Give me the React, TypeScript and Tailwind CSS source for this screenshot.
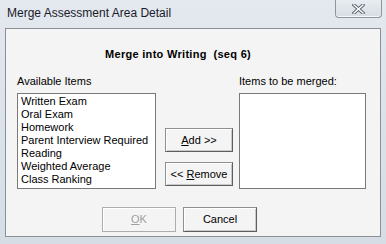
import React from 'react';

const items = [
  'Written Exam',
  'Oral Exam',
  'Homework',
  'Parent Interview Required',
  'Reading',
  'Weighted Average',
  'Class Ranking',
];

// classic dialog button
function DlgButton({ children, disabled, width = 'w-[74px]', height = 'h-[25px]' }: { children: React.ReactNode; disabled?: boolean; width?: string; height?: string }) {
  return (
    <button
      className={
        disabled
          ? `${width} ${height} flex items-center justify-center bg-[#f4f4f4] border border-[#adadad] text-[#a0a0a0] text-[11px] shadow-[inset_1px_1px_0_#ffffff]`
          : `${width} ${height} flex items-center justify-center bg-[#f4f4f4] border border-[#8e8f8f] border-r-[#5e5e5e] border-b-[#5e5e5e] text-black text-[11px] shadow-[inset_1px_1px_0_#ffffff,inset_-1px_-1px_0_#c9c9c9]`
      }
    >
      {children}
    </button>
  );
}

export default function App() {
  return (
    <div
      className="w-[386px] h-[244px] overflow-hidden flex flex-col bg-gradient-to-b from-[#e3e9ee] via-[#dbe2e8] to-[#d6dde4]"
      style={{ fontFamily: '"Liberation Sans", Arial, sans-serif' }}
    >
      {/* title bar */}
      <div className="h-[28px] flex items-start shrink-0">
        <div className="pl-[7px] pt-[6px] text-[12px] leading-[14px] text-[#1a1a2a]">Merge Assessment Area Detail</div>
        <div className="ml-auto mr-[4px] w-[47px] h-[18px] rounded-b-[4px] border border-t-0 border-[#8d96a0] bg-gradient-to-b from-[#e9edf1] to-[#d7dde3] flex items-center justify-center shadow-[inset_0_-1px_0_#f5f7f9]">
          <svg width="13" height="10" viewBox="0 0 13 10">
            <path d="M2 1 L11 9 M11 1 L2 9" stroke="#5f6a76" strokeWidth="3.4" strokeLinecap="square" />
            <path d="M2 1 L11 9 M11 1 L2 9" stroke="#ffffff" strokeWidth="1.4" strokeLinecap="square" />
          </svg>
        </div>
      </div>

      {/* client area */}
      <div className="mx-[5px] h-[209px] shrink-0 border border-[#8a9096] bg-[#f4f4f4] flex flex-col text-[11px] text-black">
        <div className="mt-[19px] pl-[99px] h-[13px] leading-[13px] font-bold tracking-[0.3px] whitespace-pre">Merge into Writing  (seq 6)</div>

        <div className="mt-[14px] pl-[11px] flex">
          {/* available */}
          <div className="flex flex-col w-[139px]">
            <div className="h-[13px] leading-[13px]">Available Items</div>
            <div className="mt-[5px] h-[96px] border border-[#7a7a7a] bg-white pl-[3px] pt-[1px] overflow-hidden">
              {items.map((it) => (
                <div key={it} className="h-[13px] leading-[13px] whitespace-nowrap">{it}</div>
              ))}
            </div>
          </div>

          {/* buttons */}
          <div className="ml-[9px] pt-[53px] flex flex-col gap-[10px]">
            <DlgButton width="w-[68px]" height="h-[24px]">
              <span><span className="underline">A</span>dd &gt;&gt;</span>
            </DlgButton>
            <DlgButton width="w-[68px]" height="h-[24px]">
              <span>&lt;&lt; <span className="underline">R</span>emove</span>
            </DlgButton>
          </div>

          {/* merged */}
          <div className="ml-[6px] flex flex-col w-[127px]">
            <div className="h-[13px] leading-[13px]">Items to be merged:</div>
            <div className="mt-[5px] h-[96px] border border-[#7a7a7a] bg-white" />
          </div>
        </div>

        <div className="mt-[18px] pl-[96px] flex gap-[7px]">
          <DlgButton disabled>
            <span><span className="underline">O</span>K</span>
          </DlgButton>
          <DlgButton>Cancel</DlgButton>
        </div>
      </div>
    </div>
  );
}
